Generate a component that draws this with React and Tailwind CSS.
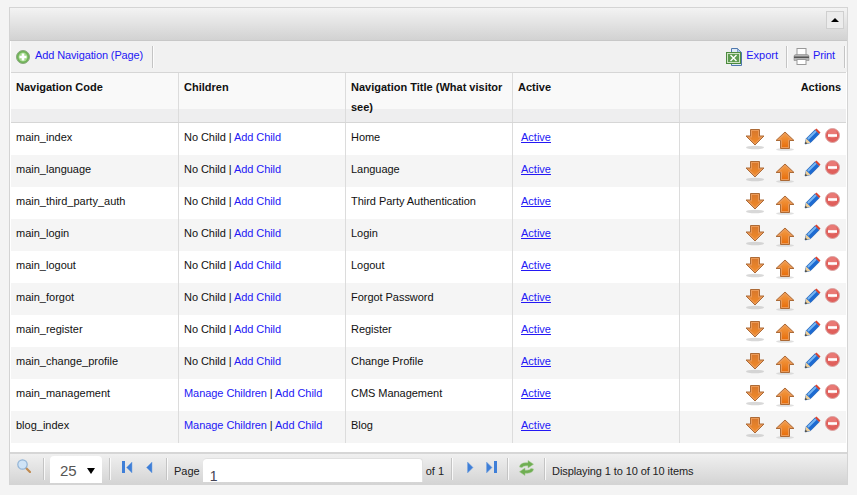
import { Fragment } from "react";

const ROWS = [
  ["main_index", "Home", false],
  ["main_language", "Language", false],
  ["main_third_party_auth", "Third Party Authentication", false],
  ["main_login", "Login", false],
  ["main_logout", "Logout", false],
  ["main_forgot", "Forgot Password", false],
  ["main_register", "Register", false],
  ["main_change_profile", "Change Profile", false],
  ["main_management", "CMS Management", true],
  ["blog_index", "Blog", true],
];

const LINK = "text-[#2418f5]";
const COLS = "grid grid-cols-[168px_167px_167px_167px_166px]";

function Sep({ h = "h-[22px]" }) {
  return <div className={`w-[2px] ${h} border-l border-[#c4c4c4] bg-white/80 shrink-0`} />;
}

function ArrowDown() {
  return (
    <svg width="20" height="22" viewBox="0 0 20 22">
      <defs>
        <linearGradient id="dn" x1="0" y1="0" x2="0" y2="1">
          <stop offset="0" stopColor="#d9782c" />
          <stop offset="1" stopColor="#f08a2a" />
        </linearGradient>
      </defs>
      <ellipse cx="10" cy="19.500" rx="9" ry="1.800" fill="#b8b8b8" opacity="0.55" />
      <path d="M5.500 1.500h9v6.500h4.500L10 17 1 8h4.500z" fill="#eb9a58" stroke="#ac6a36" strokeWidth="1" />
      <path d="M7 3h6v6.500h2.500L10 15 4.500 9.500H7z" fill="url(#dn)" />
    </svg>
  );
}

function ArrowUp() {
  return (
    <svg width="20" height="20" viewBox="0 0 20 20">
      <defs>
        <linearGradient id="up" x1="0" y1="0" x2="0" y2="1">
          <stop offset="0" stopColor="#f29a44" />
          <stop offset="1" stopColor="#e8700e" />
        </linearGradient>
      </defs>
      <ellipse cx="10" cy="18.500" rx="9" ry="1.300" fill="#c0c0c0" opacity="0.5" />
      <path d="M10 1l9 8.500h-4.500v8h-9v-8H1z" fill="#eb9a58" stroke="#ac6a36" strokeWidth="1" />
      <path d="M10 3l5.500 5.500H13V16H7V8.500H4.500z" fill="url(#up)" />
    </svg>
  );
}

function Pencil() {
  return (
    <svg width="17" height="17" viewBox="0 0 17 17">
      <path d="M1 16l1.300-5.500L11 1.800l4.200 4.200L6.500 14.700z" fill="#1d6bd2" stroke="#1a56a8" strokeWidth="0.600" />
      <path d="M3.200 10.300L11.300 2.300l1.400 1.400-8.100 8z" fill="#78b6f2" />
      <path d="M11 1.800l1.500-1.300 4 4-1.300 1.500z" fill="#d9432f" />
      <path d="M1 16l1.300-5.500 4.200 4.200z" fill="#edcf9a" />
      <path d="M1 16l.6-2.300 1.700 1.700z" fill="#333" />
    </svg>
  );
}

function Minus() {
  return (
    <svg width="15" height="15" viewBox="0 0 15 15">
      <circle cx="7.500" cy="7.500" r="7" fill="#e0605c" stroke="#dba5a3" strokeWidth="1" />
      <circle cx="7.500" cy="5.500" r="4.500" fill="#ee8a86" opacity="0.6" />
      <rect x="3" y="6.200" width="9" height="2.600" fill="#fff" />
    </svg>
  );
}

function AddIcon() {
  return (
    <svg width="14" height="14" viewBox="0 0 14 14">
      <circle cx="7" cy="7" r="6.500" fill="#6fb257" stroke="#8aa87e" />
      <circle cx="7" cy="7" r="4.500" fill="#a3d88c" />
      <path d="M5.700 3.500h2.600v2.200h2.200v2.600H8.300v2.200H5.700V8.300H3.500V5.700h2.200z" fill="#fff" />
    </svg>
  );
}

function ExcelIcon() {
  return (
    <svg width="16" height="18" viewBox="0 0 16 18">
      <path d="M5.500 0.500h6l4 4v13h-10z" fill="#dfe9f6" stroke="#4f78ad" />
      <path d="M11.500 0.500v4h4z" fill="#a9c4e4" stroke="#4f78ad" strokeWidth="0.600" />
      <rect x="0.500" y="4.500" width="14" height="11" fill="#cfe3c4" stroke="#4c8a3e" />
      <rect x="2" y="6" width="11" height="8" fill="#5d9b50" />
      <path d="M4.500 7l6 6M10.500 7l-6 6" stroke="#fff" strokeWidth="1.400" />
    </svg>
  );
}

function PrintIcon() {
  return (
    <svg width="17" height="17" viewBox="0 0 17 17">
      <rect x="4" y="0.500" width="9" height="7" fill="#fff" stroke="#999" />
      <path d="M1 8.500q0-2 2-2h11q2 0 2 2v4H1z" fill="#b4b4b4" stroke="#8a8a8a" strokeWidth="0.600" />
      <rect x="1" y="8.500" width="15" height="1.500" fill="#555" />
      <rect x="4" y="11.500" width="9" height="5" fill="#fff" stroke="#999" />
    </svg>
  );
}

function SearchIcon() {
  return (
    <svg width="14" height="14" viewBox="0 0 14 14">
      <path d="M8.500 8.500l4.500 4.500" stroke="#c08a50" strokeWidth="2.200" strokeLinecap="round" />
      <circle cx="5.500" cy="5.500" r="4.700" fill="#cfe3f6" stroke="#92b4d6" strokeWidth="1.200" />
    </svg>
  );
}

function RefreshIcon() {
  return (
    <svg width="17" height="16" viewBox="0 0 17 16">
      <path d="M1.500 7q.5-4 6-4.200h2.500V.5l5.500 3.700L10 8V5.800H8Q5 5.800 4 7.500z" fill="#6fae52" stroke="#9cc78a" strokeWidth="0.500" />
      <path d="M15.500 9q-.5 4-6 4.200H7v2.300l-5.500-3.700L7 8v2.200h2q3 0 4-1.700z" fill="#6fae52" stroke="#9cc78a" strokeWidth="0.500" />
    </svg>
  );
}

function Tri({ dir }) {
  const d = dir === "left" ? "M6 1v11L0.500 6.500z" : "M0.500 1v11L6 6.500z";
  return (
    <svg width="7" height="13" viewBox="0 0 7 13">
      <path d={d} fill="#3f7fd8" stroke="#7aa6de" strokeWidth="0.500" />
    </svg>
  );
}

function Bar({ side }) {
  return <div className={`w-[3px] h-[12px] bg-[#3f7fd8] ${side}`} />;
}

export default function App() {
  return (
    <div className="w-[857px] h-[495px] bg-[#f4f4f4] pt-[7px] pl-[9px] font-['Liberation_Sans',Arial,sans-serif] text-[11px] text-[#111] overflow-hidden">
      <div className="w-[839px] h-[478px] border border-[#d4d4d4] bg-white flex flex-col">
        <div className="h-[33px] shrink-0 bg-gradient-to-b from-[#f3f3f3] to-[#d2d2d2] border-b border-[#c8c8c8] flex justify-end items-center pr-[3px]">
          <div className="w-[18px] h-[18px] bg-[#ececec] border border-[#cfcfcf] flex items-center justify-center -translate-y-[4px]">
            <div className="w-0 h-0 border-x-[4px] border-x-transparent border-b-[4px] border-b-black" />
          </div>
        </div>

        <div className="h-[31px] shrink-0 bg-[#f1f1f1] flex items-center pl-[5px] pr-[1px] border-l border-white tracking-[-0.12px]">
          <AddIcon />
          <span className={`ml-[5px] -translate-y-[1px] ${LINK}`}>Add Navigation (Page)</span>
          <div className="ml-[9px]"><Sep /></div>
          <div className="flex-1" />
          <ExcelIcon />
          <span className={`ml-[4px] -translate-y-[1px] tracking-normal ${LINK}`}>Export</span>
          <div className="ml-[8px]"><Sep /></div>
          <div className="ml-[5px]"><PrintIcon /></div>
          <span className={`ml-[3px] -translate-y-[1px] ${LINK}`}>Print</span>
          <div className="ml-[9px]"><Sep /></div>
        </div>

        <div className="flex-1 mx-[1px] border-t border-[#d6d6d6] flex flex-col min-h-0">
          <div className={`${COLS} h-[50px] border-b border-[#d6d6d6] font-bold leading-[20px]`}>
            {["Navigation Code", "Children", "Navigation Title (What visitor see)", "Active", "Actions"].map((t, i) => (
              <div key={t} className={`flex flex-col relative ${i < 4 ? "border-r border-[#dcdcdc]" : ""}`}>
                <div className={`h-[36px] bg-[#f9f9f9] px-[5px] pt-[4px] ${i === 4 ? "text-right" : ""} ${i === 2 ? "z-10" : ""}`}>{t}</div>
                <div className="flex-1 bg-[#eeeeef]" />
              </div>
            ))}
          </div>

          {ROWS.map(([code, title, manage], i) => (
            <div key={code} className={`${COLS} h-[32px] ${i % 2 ? "bg-[#f5f5f5]" : "bg-white"}`}>
              <div className="border-r border-[#dcdcdc] px-[5px] pt-[6px]">{code}</div>
              <div className="border-r border-[#dcdcdc] px-[5px] pt-[6px] tracking-[-0.06px]">
                {manage ? (
                  <Fragment>
                    <span className={LINK}>Manage Children</span> | <span className={LINK}>Add Child</span>
                  </Fragment>
                ) : (
                  <Fragment>
                    No Child | <span className={LINK}>Add Child</span>
                  </Fragment>
                )}
              </div>
              <div className="border-r border-[#dcdcdc] px-[5px] pt-[6px] tracking-[-0.04px]">{title}</div>
              <div className="border-r border-[#dcdcdc] pl-[8px] pt-[6px]">
                <span className={`${LINK} underline`}>Active</span>
              </div>
              <div className="flex items-start pl-[65px] pt-[5px]">
                <ArrowDown />
                <div className="ml-[10px] mt-[3px]"><ArrowUp /></div>
                <div className="ml-[9px]"><Pencil /></div>
                <div className="ml-[4px]"><Minus /></div>
              </div>
            </div>
          ))}
        </div>

        <div className="h-[32px] shrink-0 border-t-2 border-[#d6d6d6] bg-gradient-to-b from-[#f0f0f0] to-[#d4d4d4] flex items-center pl-[7px] text-[#222]">
          <div className="-translate-y-[3px]"><SearchIcon /></div>
          <div className="ml-[12px]"><Sep /></div>
          <div className="ml-[5px] w-[52px] h-[27px] mt-[1px] bg-white rounded-t-[4px] flex items-center justify-between pl-[10px] pr-[7px] text-[15px] text-[#555]">
            <span className="translate-y-[2px]">25</span>
            <div className="w-0 h-0 border-x-[4px] border-x-transparent border-t-[6px] border-t-black translate-y-[1px]" />
          </div>
          <div className="ml-[7px]"><Sep /></div>
          <div className="ml-[11px] flex items-center -translate-y-[2px]">
            <Bar side="mr-[1px]" />
            <Tri dir="left" />
          </div>
          <div className="ml-[13px] -translate-y-[2px]"><Tri dir="left" /></div>
          <div className="ml-[13px]"><Sep /></div>
          <span className="ml-[6px] translate-y-[2px]">Page</span>
          <div className="ml-[3px] w-[220px] h-[24px] mt-[2px] bg-white rounded-t-[4px] border-r border-t border-[#e0e0e0] pl-[7px] pt-[8px] text-[14px] leading-[18px] text-[#445]">1</div>
          <span className="ml-[3px] translate-y-[2px]">of 1</span>
          <div className="ml-[7px]"><Sep /></div>
          <div className="ml-[14px] -translate-y-[2px]"><Tri dir="right" /></div>
          <div className="ml-[12px] flex items-center -translate-y-[2px]">
            <Tri dir="right" />
            <Bar side="ml-[1px]" />
          </div>
          <div className="ml-[10px]"><Sep /></div>
          <div className="ml-[9px] -translate-y-[1px]"><RefreshIcon /></div>
          <div className="ml-[9px]"><Sep /></div>
          <span className="ml-[6px] translate-y-[2px] tracking-[-0.1px]">Displaying 1 to 10 of 10 items</span>
        </div>
      </div>
    </div>
  );
}
